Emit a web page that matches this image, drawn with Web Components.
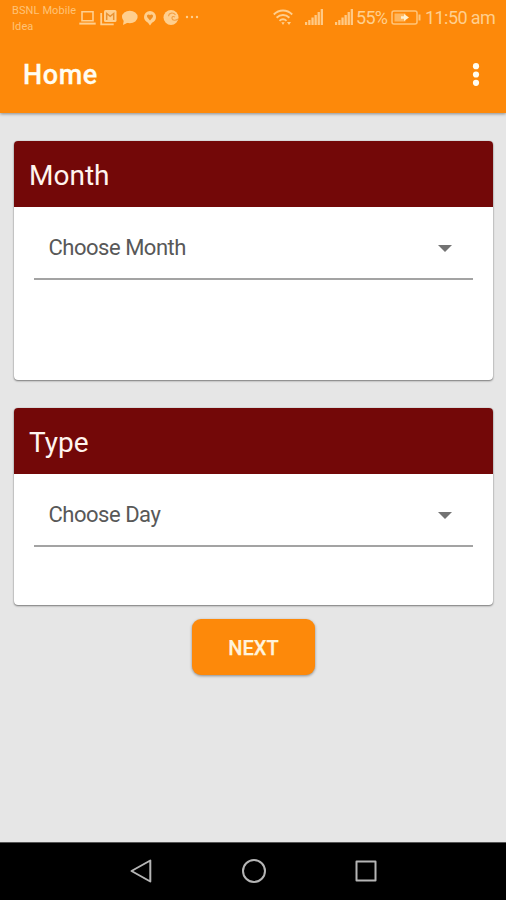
<!DOCTYPE html>
<html lang="en">
<head>
<meta charset="utf-8">
<title>Home</title>
<style>
html,body{margin:0;height:100%}
body{font-family:Roboto,"Liberation Sans",sans-serif;background:#e6e6e6;overflow:hidden}
</style>
</head>
<body>
<home-screen></home-screen>
<script>
function define(name, html) {
  const template = document.createElement('template');
  template.innerHTML = html;
  customElements.define(name, class extends HTMLElement {
    constructor() {
      super();
      this.attachShadow({ mode: 'open' }).append(template.content.cloneNode(true));
    }
  });
}

define('signal-bars', `
<style>:host{display:block;width:18px;height:16px}svg{display:block}</style>
<svg width="18" height="16" fill="#ffc985"><path d="M0 13h2.200v3H0zM3.200 11h2.300v5H3.200zM6.400 8.500h2.300v7.500H6.400zM9.500 6h2.300v10H9.500zM12.600 3h2.300v13h-2.300zM15.700 0H18v16h-2.300z"/></svg>`);

define('status-bar', `
<style>
:host{display:flex;height:36px;color:#ffcf8e;background:#fd890a;box-sizing:border-box;position:relative;z-index:2}
svg{display:block;flex:none}
.carrier{width:67px;padding:3px 0 0 12px;font-size:11px;line-height:15.500px;white-space:nowrap;letter-spacing:.1px;color:#ffc377}
.notes{display:flex;gap:4px;padding-top:9px}
.notes svg:nth-child(n+4){margin-left:-1px}
.right{margin-left:auto;display:flex;padding:9px 11px 0 0;font-size:18px;line-height:18px;white-space:nowrap}
signal-bars{margin-left:12px}
.pct{width:31px;margin-left:3px;letter-spacing:-.7px}
.battery{margin:0 4px 0 4px}
.time{width:70px;letter-spacing:-.57px}
</style>
<div class="carrier">BSNL Mobile<br>Idea</div>
<div class="notes">
<svg width="17" height="17" fill="none" stroke="#ffcf8e" stroke-width="1.600"><path d="M3 2.800h11v9H3z"/><path d="M.3 14.600h16.400" stroke-width="2"/></svg>
<svg width="17" height="17" fill="none" stroke="#ffcf8e"><path d="M1.200 4v11.300h12.500" stroke-width="1.800"/><rect x="4" y="1" width="12.500" height="12" rx="1.500" fill="#ffcf8e" stroke="none"/><path d="M6.700 11V4.500l3.500 2.800 3.500-2.800V11" stroke="#e99231" stroke-width="1.500"/></svg>
<svg width="17" height="17" fill="#ffcf8e"><ellipse cx="8.800" cy="8" rx="7.800" ry="6.200"/><path d="M3 10l-1 6 6-3z"/></svg>
<svg width="19" height="17"><path d="M9 2a6 6 0 0 0-6 6c0 2.800 2 4.800 4 5.800L9 16.500l2-2.700c2.500-1 4-3.100 4-5.800a6 6 0 0 0-6-6z" fill="#ffcf8e"/><path d="M9 11.500L6.300 8.200a1.600 1.600 0 0 1 2.700-2 1.600 1.600 0 0 1 2.700 2z" fill="#f28e20"/></svg>
<svg width="17" height="17" fill="none"><circle cx="8" cy="8.500" r="7.500" fill="#ffcf8e"/><path d="M12.500 6c-2-3-6.500-2.500-7 1.200M15 10c-2.500 2-5.500 1.500-6-.5s1.500-2.500 3-1.400" stroke="#f5a044" stroke-width="1.100"/></svg>
<svg width="18" height="17" fill="#ffcf8e"><circle cx="4" cy="8" r="1.200"/><circle cx="9" cy="8" r="1.200"/><circle cx="14" cy="8" r="1.200"/></svg>
</div>
<div class="right">
<svg width="20" height="17" fill="none" stroke="#ffcf8e" stroke-width="1.900"><path d="M.8 5.500c5.200-5.300 13.200-5.300 18.400 0M3.600 8.700c3.700-3.600 9.100-3.600 12.800 0M6.500 11.800c2-2 5-2 7 0"/><path d="M8.300 13.200h3.400L10 16zM14 13h4l-2 3z" fill="#ffcf8e" stroke="none"/></svg>
<signal-bars></signal-bars><signal-bars></signal-bars>
<span class="pct">55%</span>
<svg class="battery" width="30" height="17" fill="none" stroke="#ffc57b"><rect x="1" y="2" width="25" height="13" rx="2" stroke-width="1.500"/><path d="M3.500 4.500h11v8h-11z" fill="#ffb75f" stroke="none"/><path d="M28.500 5.500v6" stroke-width="2"/><path d="M10 7.200h3V5l5 3.500-5 3.500V9.800h-3z" fill="#fff0ce" stroke="none"/></svg>
<span class="time">11:50 am</span>
</div>`);

define('app-bar', `
<style>
:host{display:flex;align-items:center;justify-content:space-between;height:77px;padding:0 24px 0 23px;box-sizing:border-box;background:#fd890a;color:#fffdf2;box-shadow:0 1px 3px #0006;position:relative}
.title{font-size:27px;line-height:32px;font-weight:500;letter-spacing:.6px;-webkit-text-stroke:.3px #fffdf2}
svg{display:block}
</style>
<div class="title"><slot></slot></div>
<svg width="12" height="24" fill="#fffdf2"><circle cx="6" cy="3.200" r="3.100"/><circle cx="6" cy="11.500" r="3.100"/><circle cx="6" cy="19.800" r="3.100"/></svg>`);

define('choice-card', `
<style>
:host{display:block;margin:0 13px 0 14px;background:#fff;border-radius:4px;box-shadow:0 1px 2px #0007,0 0 1px #0005;overflow:hidden;box-sizing:border-box}
.head{display:flex;align-items:center;height:66px;box-sizing:border-box;padding:4px 15px 0;background:#730808;color:#fff4ee;font-size:28px;line-height:32px}
</style>
<div class="head"><slot name="title"></slot></div>
<slot></slot>`);

define('select-field', `
<style>
:host{display:flex;align-items:center;justify-content:space-between;margin:0 20px;height:73px;box-sizing:border-box;padding:11px 21px 0 14.500px;border-bottom:2px solid #a3a3a3;color:#585858;font-size:22px;line-height:26px;letter-spacing:-.48px}
svg{display:block}
</style>
<span><slot></slot></span>
<svg width="14" height="7" fill="#737373"><path d="M0 0h14L7 7z"/></svg>`);

define('raised-button', `
<style>
:host{display:flex;align-items:center;justify-content:center;width:123px;height:56px;padding-top:1px;box-sizing:border-box;border-radius:9px;background:#fd890a;color:#fff3dc;font-size:20px;font-weight:500;-webkit-text-stroke:.25px #fff3dc;box-shadow:0 1px 3px #0006}
</style>
<slot></slot>`);

define('nav-bar', `
<style>
:host{display:flex;justify-content:space-between;height:58px;box-sizing:border-box;padding:15px 127px 0 128px;background:#000;border-top:1px solid #555}
svg{display:block}
</style>
<svg width="26" height="28" fill="none" stroke="#b5b5b5" stroke-width="2" stroke-linejoin="round"><path d="M22.300 2.500v21L3.500 13z"/></svg>
<svg width="26" height="28" fill="none" stroke="#b5b5b5" stroke-width="2"><circle cx="13" cy="13" r="11"/></svg>
<svg width="26" height="28" fill="none" stroke="#b5b5b5" stroke-width="2" stroke-linejoin="round"><path d="M3.500 3.500h19v19h-19z"/></svg>`);

define('home-screen', `
<style>
:host{display:flex;flex-direction:column;height:900px;width:506px;background:#e6e6e6}
main{flex:1;display:flex;flex-direction:column;padding-top:28px}
.month{height:239px}
.type{height:197px;margin-top:28px}
raised-button{margin:14px 0 0 192px}
</style>
<status-bar></status-bar>
<app-bar>Home</app-bar>
<main>
<choice-card class="month"><span slot="title">Month</span><select-field>Choose Month</select-field></choice-card>
<choice-card class="type"><span slot="title">Type</span><select-field>Choose Day</select-field></choice-card>
<raised-button>NEXT</raised-button>
</main>
<nav-bar></nav-bar>`);
</script>
</body>
</html>
